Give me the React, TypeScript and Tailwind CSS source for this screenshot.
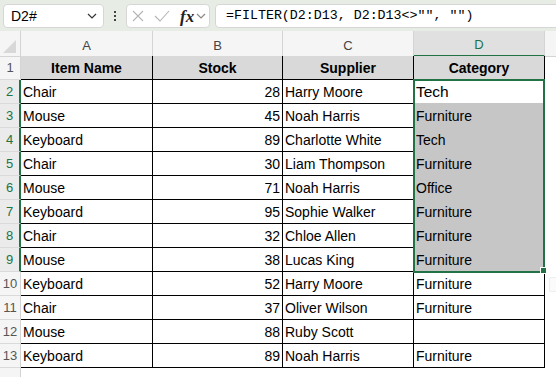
import type { ReactNode } from "react";

const rows: [string, number, string, string][] = [
  ["Chair", 28, "Harry Moore", "Tech"],
  ["Mouse", 45, "Noah Harris", "Furniture"],
  ["Keyboard", 89, "Charlotte White", "Tech"],
  ["Chair", 30, "Liam Thompson", "Furniture"],
  ["Mouse", 71, "Noah Harris", "Office"],
  ["Keyboard", 95, "Sophie Walker", "Furniture"],
  ["Chair", 32, "Chloe Allen", "Furniture"],
  ["Mouse", 38, "Lucas King", "Furniture"],
  ["Keyboard", 52, "Harry Moore", "Furniture"],
  ["Chair", 37, "Oliver Wilson", "Furniture"],
  ["Mouse", 88, "Ruby Scott", ""],
  ["Keyboard", 89, "Noah Harris", "Furniture"],
];

const gridCols = "grid grid-cols-[21px_132px_130px_131px_131px_11px]";

function Chevron({ className }: { className?: string }) {
  return (
    <svg width="10" height="6" viewBox="0 0 10 6" className={className}>
      <polyline points="1,1 5,5 9,1" fill="none" stroke="currentColor" strokeWidth="1.2" />
    </svg>
  );
}

function FormulaBar() {
  return (
    <div className="flex h-[31px] items-start bg-[#e7ede5] pl-[3px] pt-[4px]">
      <div className="flex h-[24px] w-[101px] shrink-0 items-center justify-between rounded-[4px] border border-[#d6d6d6] bg-white pl-[7px] pr-[6px] text-[14px] text-black">
        <span>D2#</span>
        <Chevron className="text-[#333]" />
      </div>
      <div className="flex h-[24px] w-[22px] shrink-0 flex-col items-center justify-center gap-[2px]">
        <span className="h-[2px] w-[2px] bg-[#444]" />
        <span className="h-[2px] w-[2px] bg-[#444]" />
        <span className="h-[2px] w-[2px] bg-[#444]" />
      </div>
      <div className="flex h-[24px] w-[84px] shrink-0 items-center rounded-[4px] border border-[#d6d6d6] bg-white pl-[5px]">
        <svg width="12" height="12" viewBox="0 0 12 12">
          <path d="M1 1 L11 11 M11 1 L1 11" stroke="#b5b5b5" strokeWidth="1.1" fill="none" />
        </svg>
        <svg width="16" height="12" viewBox="0 0 16 12" className="ml-[10px]">
          <polyline points="1,6 6,11 15,1" stroke="#b5b5b5" strokeWidth="1.1" fill="none" />
        </svg>
        <span className="ml-[10px] font-['Liberation_Serif',serif] text-[17px] font-semibold italic leading-none text-[#222]">fx</span>
        <Chevron className="ml-[2px] text-[#888]" />
      </div>
      <div className="ml-[5px] flex h-[24px] w-[400px] shrink-0 items-center rounded-[4px] border border-[#d6d6d6] bg-white pl-[10px] font-['Liberation_Mono',monospace] text-[13.3px] text-black">
        =FILTER(D2:D13, D2:D13&lt;&gt;"", "")
      </div>
    </div>
  );
}

function HeaderCell({ children, active }: { children?: ReactNode; active?: boolean }) {
  return (
    <div
      className={
        active
          ? "flex items-center justify-center border-r border-b-2 border-r-[#d4d4d4] border-b-[#217346] bg-[#e0e0e0] pt-[4px] text-[13px] text-[#217346]"
          : "flex items-center justify-center border-r border-b border-[#d4d4d4] pt-[4px] text-[13px] text-[#444]"
      }
    >
      {children}
    </div>
  );
}

function RowHead({ n, active }: { n?: number; active?: boolean }) {
  return (
    <div
      className={
        active
          ? "flex items-end justify-center border-b border-r-2 border-b-[#dadada] border-r-[#217346] bg-[#ebebeb] pb-[3px] text-[13px] leading-[16px] text-[#217346]"
          : "flex items-end justify-center border-b border-r border-b-[#dadada] border-r-[#d4d4d4] bg-[#f5f5f5] pb-[3px] text-[13px] leading-[16px] text-[#555]"
      }
    >
      {n}
    </div>
  );
}

function Cell({ children, className = "" }: { children?: ReactNode; className?: string }) {
  return (
    <div
      className={
        "flex items-end overflow-hidden whitespace-nowrap border-r border-b px-[2px] pb-[3px] text-[14px] leading-[16px] " +
        className
      }
    >
      {children}
    </div>
  );
}

function Sheet() {
  return (
    <div>
      <div className={gridCols + " h-[25px] bg-[#f5f5f5]"}>
        <div className="relative border-r border-b border-[#d4d4d4]">
          <svg width="14" height="14" viewBox="0 0 14 14" className="absolute bottom-[2px] right-[3px]">
            <polygon points="13,0 13,13 0,13" fill="#d8d8d8" />
          </svg>
        </div>
        <HeaderCell>A</HeaderCell>
        <HeaderCell>B</HeaderCell>
        <HeaderCell>C</HeaderCell>
        <HeaderCell active>D</HeaderCell>
        <div className="border-b border-[#d4d4d4]" />
      </div>

      <div className={gridCols + " h-[24px]"}>
        <RowHead n={1} />
        <Cell className="justify-center border-black bg-[#d9d9d9] font-bold">Item Name</Cell>
        <Cell className="justify-center border-black bg-[#d9d9d9] font-bold">Stock</Cell>
        <Cell className="justify-center border-black bg-[#d9d9d9] font-bold">Supplier</Cell>
        <Cell className="justify-center border-black bg-[#d9d9d9] font-bold">Category</Cell>
        <div />
      </div>

      {rows.map((r, i) => {
        const n = i + 2;
        const selected = n >= 2 && n <= 9;
        let dClass = "border-black";
        if (n === 2) dClass = "border-r-black border-b-[#c6c6c6] text-[15.5px] leading-[17px]";
        else if (n >= 3 && n <= 8) dClass = "border-r-black border-b-[#c6c6c6] bg-[#c6c6c6]";
        else if (n === 9) dClass = "border-black bg-[#c6c6c6]";
        return (
          <div key={n} className={gridCols + " h-[24px]"}>
            <RowHead n={n} active={selected} />
            <Cell className="border-black">{r[0]}</Cell>
            <Cell className="justify-end border-black">{r[1]}</Cell>
            <Cell className="border-black">{r[2]}</Cell>
            <Cell className={dClass}>{r[3]}</Cell>
            <div />
          </div>
        );
      })}

      {/* partly visible row 14 */}
      <div className={gridCols + " h-[24px]"}>
        <RowHead />
        <div />
      </div>
    </div>
  );
}

export default function App() {
  return (
    <div className="relative h-[377px] w-[556px] overflow-hidden bg-white font-['Liberation_Sans',sans-serif] text-black">
      <FormulaBar />
      <Sheet />
      {/* selection border D2:D9 */}
      <div className="pointer-events-none absolute left-[413px] top-[79px] h-[194px] w-[132px] border-2 border-[#217346]" />
      <div className="absolute left-[540px] top-[267px] h-[7px] w-[7px] border border-white bg-[#217346]" />
      {/* quick analysis hint */}
      <div className="absolute left-[549px] top-[277px] h-[15px] w-[12px] rounded-[2px] border border-[#eeeeee] bg-[#fbfbfb]" />
    </div>
  );
}
